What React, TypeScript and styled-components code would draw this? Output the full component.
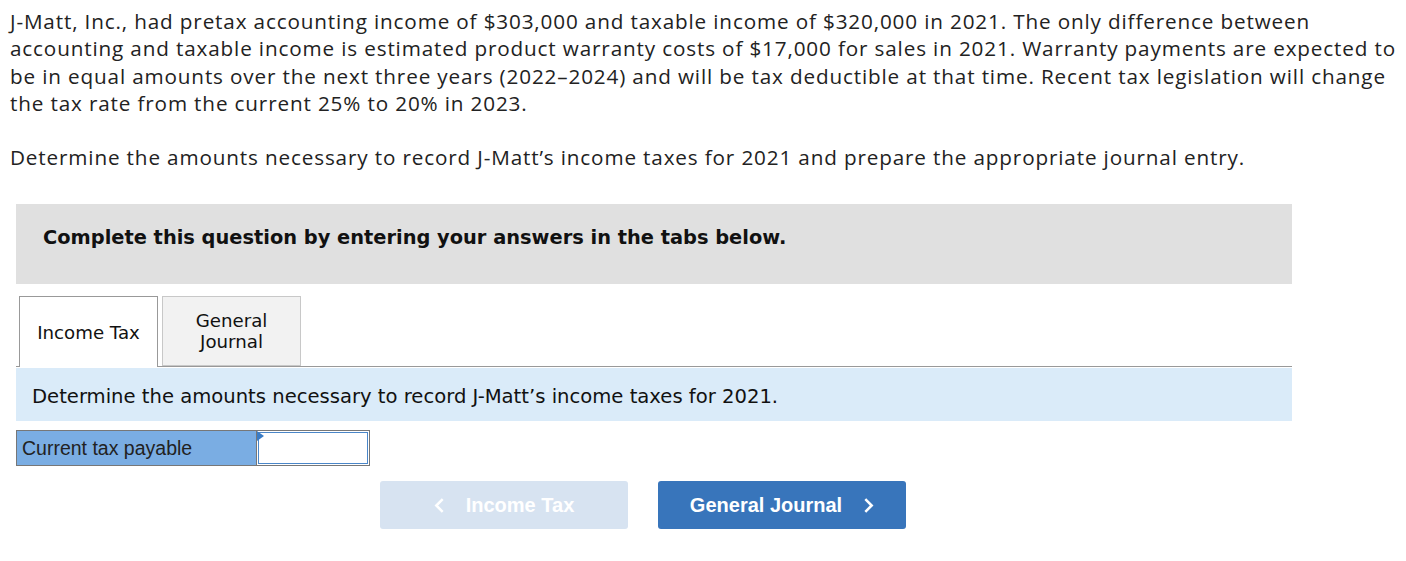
import styled, { createGlobalStyle } from 'styled-components';

const GlobalStyle = createGlobalStyle`
	body {
		margin: 0;
		background: #fff;
	}
`;

const App = () => {
	return (
		<>
			<GlobalStyle />
			<Page>
				<Problem>
					J-Matt, Inc., had pretax accounting income of $303,000 and taxable income of $320,000 in 2021. The only difference
					between
					<br />
					accounting and taxable income is estimated product warranty costs of $17,000 for sales in 2021. Warranty payments
					are expected to
					<br />
					be in equal amounts over the next three years (2022–2024) and will be tax deductible at that time. Recent tax
					legislation will change
					<br />
					the tax rate from the current 25% to 20% in 2023.
				</Problem>
				<Problem>
					Determine the amounts necessary to record J-Matt’s income taxes for 2021 and prepare the appropriate journal entry.
				</Problem>

				<Panel>
					<Banner>Complete this question by entering your answers in the tabs below.</Banner>

					<TabBar>
						<Tab $active>Income Tax</Tab>
						<Tab>
							General
							<br />
							Journal
						</Tab>
					</TabBar>

					<Instruction>Determine the amounts necessary to record J-Matt’s income taxes for 2021.</Instruction>

					<AnswerRow>
						<AnswerLabel>Current tax payable</AnswerLabel>
						<AnswerCell>
							<AnswerInput type="text" />
						</AnswerCell>
					</AnswerRow>

					<NavRow>
						<NavButton disabled>
							<Chevron viewBox="0 0 10 16">
								<path d="M8 2 L2 8 L8 14" />
							</Chevron>
							Income Tax
						</NavButton>
						<NavButton>
							General Journal
							<Chevron viewBox="0 0 10 16">
								<path d="M2 2 L8 8 L2 14" />
							</Chevron>
						</NavButton>
					</NavRow>
				</Panel>
			</Page>
		</>
	);
};

const Page = styled.div`
	display: flex;
	flex-direction: column;
	align-items: flex-start;
	padding: 8px 10px 0 10px;
`;

const Problem = styled.p`
	margin: 0 0 27px 0;
	font-family: 'Open Sans', 'Noto Sans', sans-serif;
	font-size: 20.7px;
	letter-spacing: 0.85px;
	line-height: 27.3px;
	color: #222;
	white-space: nowrap;
`;

const Panel = styled.div`
	margin: 6px 0 0 6px;
	width: 1276px;
`;

const Banner = styled.div`
	height: 80px;
	box-sizing: border-box;
	padding: 22px 27px 0 27px;
	background: #e0e0e0;
	font-family: 'DejaVu Sans', Verdana, sans-serif;
	font-weight: bold;
	font-size: 19.4px;
	line-height: 24px;
	color: #111;
`;

const TabBar = styled.div`
	display: flex;
	align-items: flex-end;
	gap: 4px;
	margin-top: 12px;
	padding-left: 3px;
	border-bottom: 1px solid #999;
	height: 70px;
`;

const Tab = styled.div<{ $active?: boolean }>`
	width: 139px;
	height: ${({ $active }) => ($active ? '71px' : '70px')};
	margin-bottom: ${({ $active }) => ($active ? '-1px' : '0')};
	box-sizing: border-box;
	display: flex;
	align-items: center;
	justify-content: center;
	text-align: center;
	background: ${({ $active }) => ($active ? '#fff' : '#f2f2f2')};
	border: 1px solid ${({ $active }) => ($active ? '#999' : '#c8c8c8')};
	border-bottom: ${({ $active }) => ($active ? 'none' : '1px solid #c8c8c8')};
	font-family: 'DejaVu Sans', Verdana, sans-serif;
	font-size: 18.2px;
	line-height: 21px;
	color: #111;
`;

const Instruction = styled.div`
	margin-top: 1px;
	height: 53px;
	box-sizing: border-box;
	display: flex;
	align-items: center;
	padding: 3px 16px 0 16px;
	background: #daebf9;
	font-family: 'DejaVu Sans', Verdana, sans-serif;
	font-size: 19.6px;
	color: #111;
`;

const AnswerRow = styled.div`
	display: flex;
	margin-top: 9px;
	width: 354px;
	height: 36px;
	border: 1px solid #777;
	box-sizing: border-box;
`;

const AnswerLabel = styled.div`
	width: 240px;
	box-sizing: border-box;
	display: flex;
	align-items: center;
	padding-left: 5px;
	background: #7aade3;
	border-right: 1px solid #777;
	font-family: 'Liberation Sans', Arial, sans-serif;
	font-size: 19.5px;
	color: #222;
`;

const AnswerCell = styled.div`
	position: relative;
	flex: 1;
	padding: 1px;
	display: flex;

	&::before {
		content: '';
		position: absolute;
		top: 0;
		left: 0;
		border-left: 7px solid #3a7cc6;
		border-top: 5px solid transparent;
		border-bottom: 5px solid transparent;
	}
`;

const AnswerInput = styled.input`
	flex: 1;
	width: 100%;
	box-sizing: border-box;
	border: 1px solid #4a86c8;
	outline: none;
	background: #fff;
	padding: 0 4px;
`;

const NavRow = styled.div`
	display: flex;
	gap: 30px;
	margin-top: 15px;
	padding-left: 364px;
`;

const NavButton = styled.button`
	width: 248px;
	height: 48px;
	display: flex;
	align-items: center;
	justify-content: center;
	gap: 21px;
	border: none;
	border-radius: 3px;
	background: #3875bb;
	color: #fff;
	font-family: 'Liberation Sans', Arial, sans-serif;
	font-weight: bold;
	font-size: 20px;
	cursor: pointer;

	&:disabled {
		background: #d7e3f1;
		cursor: default;
	}
`;

const Chevron = styled.svg`
	width: 11px;
	height: 17px;
	fill: none;
	stroke: #fff;
	stroke-width: 2.4;
`;

export default App;
